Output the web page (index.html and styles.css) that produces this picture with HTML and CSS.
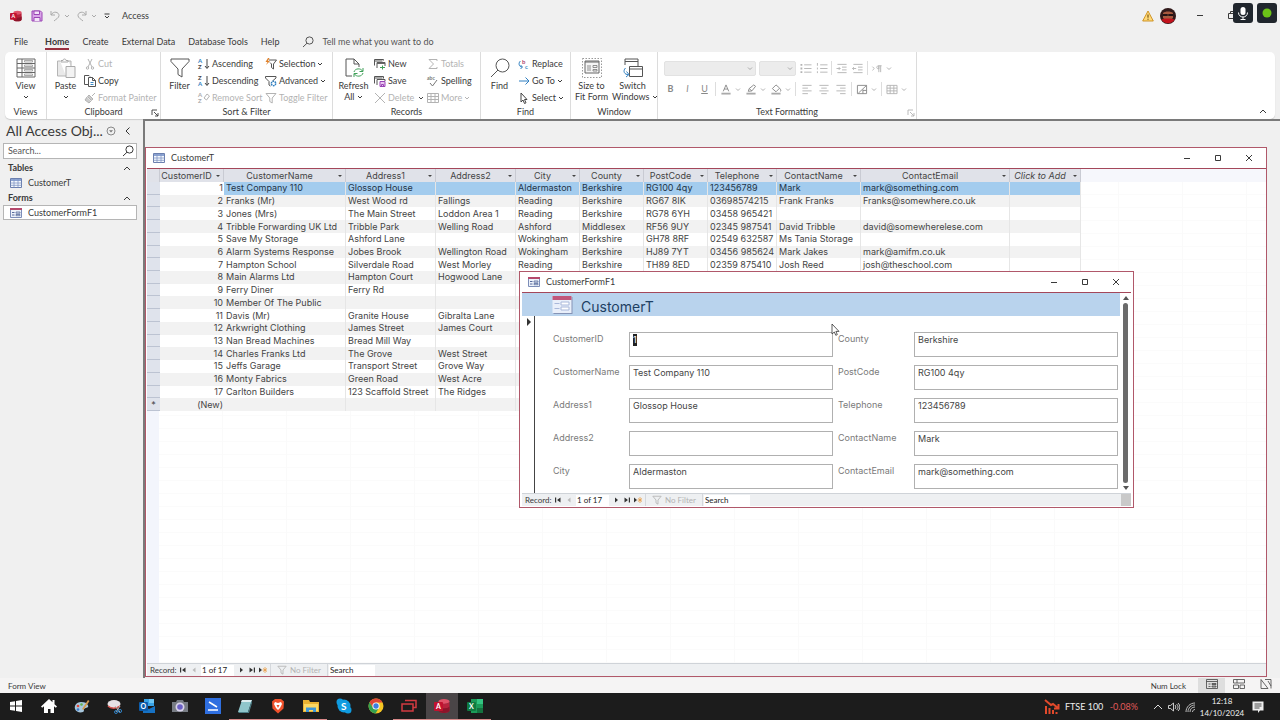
FILE: index.html
```html
<!DOCTYPE html>
<html lang="en">
  <head>
    <meta charset="UTF-8" />
    <meta name="viewport" content="width=device-width, initial-scale=1.0" />
    <title>Access</title>
    <link rel="stylesheet" href="styles.css">
  </head>
  <body>
    <!-- Shared icons -->
    <svg class="sprite" aria-hidden="true">
      <symbol id="chev" viewBox="0 0 6 6"><path d="M1 2l2 2 2-2" fill="none" stroke="currentColor" /></symbol>
      <symbol id="up" viewBox="0 0 8 8"><path d="M1 6l3-3 3 3" fill="none" stroke="currentColor" /></symbol>
      <symbol id="search" viewBox="0 0 12 12"><circle cx="7.5" cy="4.5" r="3.6" fill="none" stroke="currentColor" /><path d="M5 7.2L1 11" stroke="currentColor" /></symbol>
      <symbol id="funnel" viewBox="0 0 12 12"><path d="M1 1.5h10L7.2 6v5L4.8 9.5V6z" fill="none" stroke="currentColor" /></symbol>
      <symbol id="table" viewBox="0 0 12 10"><path d="M.5 .5h11v9H.5z" fill="#f4f8fd" stroke="#6b7fae" /><path d="M1 1h10v2H1z" fill="#8ba3d2" /><path d="M.5 5h11M.5 7.3h11M4 1v8.5M8 1v8.5" stroke="#8196c4" stroke-width=".8" /></symbol>
      <symbol id="form" viewBox="0 0 12 10"><path d="M.5 .5h11v9H.5z" fill="#edf2fa" stroke="#7c8db8" /><path d="M0 0h12v2H0z" fill="#b4496c" /><path d="M2 4.5h2.5M2 7h2.5" stroke="#56699c" /><path d="M6 4h4v1.2H6zM6 6.5h4v1.2H6z" fill="#fff" stroke="#56699c" stroke-width=".8" /></symbol>
      <symbol id="launch" viewBox="0 0 8 8"><path d="M1 6V1h5M3 3l4 4M7 4v3H4" fill="none" stroke="currentColor" stroke-width=".9" /></symbol>
      <symbol id="grid" viewBox="0 0 12 12"><path d="M.5 1.5h11v9H.5zM.5 4.5h11M.5 7.5h11M4 1.5v9M8 1.5v9" fill="none" stroke="currentColor" /></symbol>
      <symbol id="min" viewBox="0 0 10 10"><path d="M2 5.5h6" stroke="currentColor" /></symbol>
      <symbol id="max" viewBox="0 0 10 10"><path d="M2.5 2.5h5v5h-5z" fill="none" stroke="currentColor" /></symbol>
      <symbol id="close" viewBox="0 0 10 10"><path d="M2 2l6 6M8 2l-6 6" stroke="currentColor" /></symbol>
      <symbol id="access" viewBox="0 0 16 16"><ellipse cx="10" cy="3.5" rx="5.5" ry="2.5" fill="#e05268" /><path d="M4.5 3.5v9c0 3.3 11 3.3 11 0v-9c0 3-11 3-11 0z" fill="#b7223c" /><path d="M4.5 8c0 3 11 3 11 0v4.5c0 3.3-11 3.3-11 0z" fill="#8d142a" /><rect y="4" width="9" height="9" rx="1" fill="#c1122f" /><text x="2" y="11" font-size="7" font-weight="700" fill="#fff">A</text></symbol>
    </svg>

    <header class="titlebar">
      <svg class="app" viewBox="0 0 16 16"><use href="#access" /></svg>
      <button class="qat" aria-label="Save"><svg viewBox="0 0 12 12"><path d="M1 1h8.5L11 2.5V11H1z" fill="#d9a5e8" stroke="#9a45b5" /><path d="M3 1h5.5v3.5H3zM3 11V7.5h6V11" fill="#f3e3f8" stroke="#9a45b5" /></svg></button>
      <button class="qat off" aria-label="Undo"><svg viewBox="0 0 12 12"><path d="M2 1v4h4M2 5c2.5-4.5 8-3 8 .5C10 8 7 9 5 11" fill="none" stroke="currentColor" /></svg><svg class="chev"><use href="#chev" /></svg></button>
      <button class="qat off" aria-label="Redo"><svg viewBox="0 0 12 12"><path d="M10 1v4H6M10 5C7.5.5 2 2 2 5.5 2 8 5 9 7 11" fill="none" stroke="currentColor" /></svg><svg class="chev"><use href="#chev" /></svg></button>
      <button class="qat" aria-label="Customise Quick Access Toolbar"><svg class="custom" viewBox="0 0 8 8"><path d="M1.5 2h5" stroke="currentColor" /><path d="M2 4l2 2 2-2" fill="none" stroke="currentColor" /></svg></button>
      <span class="name">Access</span>
      <svg class="warn" viewBox="0 0 12 12"><path d="M6 1l5.3 10H.7z" fill="#ffd978" stroke="#c98a16" stroke-width=".9" /><path d="M6 4.5v3.2M6 8.7v1.1" stroke="#5c3d00" /></svg>
      <svg class="avatar" viewBox="0 0 16 16"><circle cx="8" cy="8" r="8" fill="#31191a" /><path d="M3 5c2-2 8-2 10 0v5c-2 2-8 2-10 0z" fill="#a8593f" /><path d="M3 6h4.5L8 7l.5-1H13v2H9L8 7.5 7 8H3z" fill="#241415" /><path d="M1.2 11.5c3-1.5 10-1.5 13.6 0A8 8 0 0 1 1.2 11.5z" fill="#c3121c" /></svg>
      <div class="controls">
        <button aria-label="Minimise"><svg viewBox="0 0 10 10"><use href="#min" /></svg></button>
        <button aria-label="Restore"><svg viewBox="0 0 10 10"><path d="M1.5 3.5h6v5h-6zM3.5 3V1.5h6v5H8" fill="none" stroke="currentColor" /></svg></button>
      </div>
      <div class="capture">
        <span><svg viewBox="0 0 20 20"><rect x="7.5" y="4" width="5" height="8" rx="2.5" fill="#fff" /><path d="M5.5 9.5c0 6 9 6 9 0M10 14v3M7.5 16.5h5" fill="none" stroke="#fff" /></svg></span>
        <span><svg viewBox="0 0 20 20"><circle cx="10" cy="10" r="4.5" fill="#6cc317" /></svg></span>
      </div>
    </header>

    <nav class="tabs">
      <a href="#file">File</a>
      <a href="#home" class="active" aria-current="page">Home</a>
      <a href="#create">Create</a>
      <a href="#external">External Data</a>
      <a href="#tools">Database Tools</a>
      <a href="#help">Help</a>
      <label class="tell"><svg><use href="#search" /></svg><input type="text" placeholder="Tell me what you want to do" aria-label="Tell me what you want to do" /></label>
    </nav>

    <section class="ribbon">
      <div class="group views">
        <div class="tools">
          <button class="big"><svg viewBox="0 0 20 20"><path d="M1 1h18v18H1zM1 5.5h18M1 10h18M1 14.5h18M6 1v18" fill="none" stroke="#666" /><path d="M8.5 2.5h8V4h-8zM8.5 7h8v1.5h-8zM8.5 11.5h8V13h-8zM8.5 16h8v1.5h-8z" fill="none" stroke="#888" stroke-width=".7" /></svg>View<svg class="chev"><use href="#chev" /></svg></button>
        </div>
        <p>Views</p>
      </div>
      <div class="group clipboard">
        <div class="tools">
          <button class="big"><svg viewBox="0 0 20 20"><path d="M4 3H1.5v15H10M12 3h3v5" fill="#e9e9e9" stroke="#b5b5b5" /><path d="M5 4V2.5h2c0-2 3-2 3 0h2V4z" fill="#fff" stroke="#aaa" /><path d="M10 8.5h9v11h-9z" fill="#f3f3f3" stroke="#aaa" /></svg>Paste<svg class="chev"><use href="#chev" /></svg></button>
          <div class="stack">
            <button disabled><svg viewBox="0 0 12 12"><path d="M4 1l4 8M8 1L4 9" stroke="currentColor" fill="none" /><circle cx="3.5" cy="10" r="1.2" fill="none" stroke="currentColor" /><circle cx="8.5" cy="10" r="1.2" fill="none" stroke="currentColor" /></svg>Cut</button>
            <button><svg viewBox="0 0 12 12"><path d="M4.5 9.5h-4v-9H5l1 1M4.5 2.5h4l3 3v6h-7zM8.5 2.5v3h3" fill="#fff" stroke="#555" /><path d="M6.5 7.5h3M6.5 9.5h3" stroke="#3c88c5" /></svg>Copy</button>
            <button disabled><svg viewBox="0 0 12 12"><path d="M11 1L8 4M5 3l4 4-1.5 1.5-4-4zM3 5L1 8l4 3 2-2" fill="#ccc" stroke="currentColor" /></svg>Format Painter</button>
          </div>
        </div>
        <p>Clipboard</p>
        <button class="launch" aria-label="Clipboard options"><svg><use href="#launch" /></svg></button>
      </div>
      <div class="group sort">
        <div class="tools">
          <button class="big"><svg viewBox="0 0 20 20"><path d="M1 1h18v2.5L12 11v8l-4-2.5V11L1 3.5z" fill="none" stroke="#555" /></svg>Filter</button>
          <div class="stack">
            <button><svg viewBox="0 0 12 12"><text x="0" y="5" class="b">A</text><text x="0" y="11">Z</text><path d="M9 1v9M7 8l2 2.5L11 8" fill="none" stroke="#444" /></svg>Ascending</button>
            <button><svg viewBox="0 0 12 12"><text x="0" y="5">Z</text><text x="0" y="11" class="b">A</text><path d="M9 1v9M7 8l2 2.5L11 8" fill="none" stroke="#444" /></svg>Descending</button>
            <button disabled><svg viewBox="0 0 12 12"><text x="0" y="5" class="o">A</text><text x="0" y="11" class="o">Z</text><path d="M6 6l3-4 2.5 2-3 4z" fill="none" stroke="currentColor" /></svg>Remove Sort</button>
          </div>
          <div class="stack">
            <button><svg viewBox="0 0 12 12"><path d="M4 2h7.5l-3 4v5l-2-1.5V6L5 4.5" fill="none" stroke="#555" /><path d="M3 0L.5 4h2L1 7l4-4H3L4.5 0z" fill="#e0812a" /></svg>Selection<svg class="chev"><use href="#chev" /></svg></button>
            <button><svg viewBox="0 0 12 12"><path d="M.5 1.5H11V3L7.5 6M.5 1.5V3L4 6.5V10l1.5 1" fill="none" stroke="#555" /><circle cx="8.5" cy="8.5" r="2.2" fill="none" stroke="#2f7fc1" stroke-width="1.5" stroke-dasharray="1.5 .6" /></svg>Advanced<svg class="chev"><use href="#chev" /></svg></button>
            <button disabled><svg><use href="#funnel" /></svg>Toggle Filter</button>
          </div>
        </div>
        <p>Sort &amp; Filter</p>
      </div>
      <div class="group records">
        <div class="tools">
          <button class="big"><svg viewBox="0 0 20 20"><path d="M8 18H2V1h8l5 5v3M10 1v5h5" fill="none" stroke="#555" /><path d="M10 14c1-4 7-4 8.5-1M19 10v3.5h-3.5M19 15c-1 4-7 4-8.5 1M10 19v-3.5h3.5" fill="none" stroke="#3f9f58" /></svg>Refresh<br />All <svg class="chev"><use href="#chev" /></svg></button>
          <div class="stack">
            <button><svg viewBox="0 0 12 12"><path d="M.5 7.5v-6h9v1M.5 3h8M3 10V4.5h8V8" fill="none" stroke="#555" /><path d="M3 4.5h8V6H3z" fill="#666" /><path d="M6 9.5h5M8.5 7.5v4" stroke="#3f9f58" /></svg>New</button>
            <button><svg viewBox="0 0 12 12"><path d="M.5 8.5v-7h9v2M.5 3h8M3 10V4.5h8V6" fill="none" stroke="#555" /><path d="M6 6.5h5v5H6zM7.5 11.5v-2h2v2" fill="#e8c6f0" stroke="#9a45b5" /></svg>Save</button>
            <button disabled><svg viewBox="0 0 12 12"><path d="M1 1l10 10M11 1L1 11" stroke="currentColor" /></svg>Delete<svg class="chev far"><use href="#chev" /></svg></button>
          </div>
          <div class="stack">
            <button disabled><svg viewBox="0 0 12 12"><path d="M10 3V1.5H2L6.5 6 2 10.5h8V9" fill="none" stroke="currentColor" /></svg>Totals</button>
            <button><svg viewBox="0 0 12 12"><text x="0" y="5" class="s">abc</text><path d="M3 8l2.5 3L10 5" fill="none" stroke="#777" /></svg>Spelling</button>
            <button disabled><svg><use href="#grid" /></svg>More<svg class="chev"><use href="#chev" /></svg></button>
          </div>
        </div>
        <p>Records</p>
      </div>
      <div class="group find">
        <div class="tools">
          <button class="big"><svg viewBox="0 0 20 20"><circle cx="12.5" cy="7.5" r="6.5" fill="none" stroke="#555" /><path d="M8 12l-7 7" stroke="#555" /></svg>Find</button>
          <div class="stack">
            <button><svg viewBox="0 0 12 12"><text x="4" y="6" class="r">b</text><text x="7" y="11" class="b">c</text><path d="M2.5 3C0 5 1 9 4 9M2.5 7l2 2-2 2" fill="none" stroke="#2f7fc1" /></svg>Replace</button>
            <button><svg viewBox="0 0 12 12"><path d="M1 6h10M7.5 2.5L11 6 7.5 9.5" fill="none" stroke="#2f7fc1" /></svg>Go To<svg class="chev"><use href="#chev" /></svg></button>
            <button><svg viewBox="0 0 12 12"><path d="M3 1v9l2-2 1.5 3.5 1.5-.7-1.5-3.3H9z" fill="none" stroke="#444" /></svg>Select<svg class="chev"><use href="#chev" /></svg></button>
          </div>
        </div>
        <p>Find</p>
      </div>
      <div class="group window">
        <div class="tools">
          <button class="big"><svg viewBox="0 0 20 20"><path d="M.5 .5h19v19H.5z" fill="none" stroke="#999" stroke-dasharray="1.5 1.5" /><path d="M3 3h14v12H3z" fill="#f5f5f5" stroke="#666" /><path d="M3 4h14" stroke="#666" /><path d="M5 8h4M5 10h4M5 12h4M11 7.5h4v2h-4zM11 11.5h4V13h-4z" fill="none" stroke="#777" stroke-width=".8" /></svg>Size to<br />Fit Form</button>
          <button class="big"><svg viewBox="0 0 20 20"><path d="M2 7V1h13v7M2 3.5h13M6.5 8.5h13v10h-13zM6.5 11h13" fill="none" stroke="#555" /><path d="M2.5 10c-3 3-1 7 3 6.5M3.5 13.5l2.5 3-3 2.5" fill="none" stroke="#2f7fc1" /></svg>Switch<br />Windows <svg class="chev"><use href="#chev" /></svg></button>
        </div>
        <p>Window</p>
      </div>
      <div class="group format">
        <div class="rows">
          <div class="row">
            <span class="pick font"><select disabled aria-label="Font"></select><svg class="chev"><use href="#chev" /></svg></span>
            <span class="pick size"><select disabled aria-label="Font size"></select><svg class="chev"><use href="#chev" /></svg></span>
            <button disabled aria-label="Bullets"><svg viewBox="0 0 12 12"><path d="M4 2h8M4 6h8M4 10h8" stroke="currentColor" /><path d="M0 2h2M0 6h2M0 10h2" stroke="currentColor" stroke-width="2" /></svg></button>
            <button disabled aria-label="Numbering"><svg viewBox="0 0 12 12"><path d="M4 2h8M4 6h8M4 10h8M1 0v3M1 5v2M1 9v2" stroke="currentColor" /></svg></button>
            <i></i>
            <button disabled aria-label="Decrease indent"><svg viewBox="0 0 12 12"><path d="M1 1.5h10M6 4.5h5M6 7.5h5M1 10.5h10M0 6h4M2.5 4.5L4 6 2.5 7.5" fill="none" stroke="currentColor" /></svg></button>
            <button disabled aria-label="Increase indent"><svg viewBox="0 0 12 12"><path d="M1 1.5h10M6 4.5h5M6 7.5h5M1 10.5h10M0 6h4M1.5 4.5L0 6l1.5 1.5" fill="none" stroke="currentColor" /></svg></button>
            <i></i>
            <button disabled aria-label="Text direction"><svg viewBox="0 0 12 12"><path d="M1 4l2 2-2 2M8 10V3h3M10 3v7M8 3c-3 0-3 3.5 0 3.5z" fill="none" stroke="currentColor" /></svg><svg class="chev"><use href="#chev" /></svg></button>
          </div>
          <div class="row wide">
            <button disabled><b>B</b></button>
            <button disabled><em>I</em></button>
            <button disabled><u>U</u></button>
            <i></i>
            <button disabled aria-label="Font colour"><svg viewBox="0 0 12 12"><path d="M3 8l3-7 3 7M4 5.5h4" fill="none" stroke="#888" /><path d="M1 10.5h10" stroke="#aaa" stroke-width="2" /></svg><svg class="chev"><use href="#chev" /></svg></button>
            <button disabled aria-label="Highlight"><svg viewBox="0 0 12 12"><path d="M3 8l1-3 5-4 2 1.5-4 5zM4 5l3 2.5" fill="none" stroke="#888" /><path d="M1 10.5h10" stroke="#aaa" stroke-width="2" /></svg><svg class="chev"><use href="#chev" /></svg></button>
            <button disabled aria-label="Background colour"><svg viewBox="0 0 12 12"><path d="M2 5l4-4 4 3.5-4 4zM10.5 5c1 2 1 3 0 3" fill="none" stroke="#888" /><path d="M1 10.5h10" stroke="#aaa" stroke-width="2" /></svg><svg class="chev"><use href="#chev" /></svg></button>
            <i></i>
            <button disabled aria-label="Align left"><svg viewBox="0 0 12 12"><path d="M1 1.5h10M1 4.5h6M1 7.5h10M1 10.5h6" stroke="currentColor" /></svg></button>
            <button disabled aria-label="Centre"><svg viewBox="0 0 12 12"><path d="M1 1.5h10M3 4.5h6M1 7.5h10M3 10.5h6" stroke="currentColor" /></svg></button>
            <button disabled aria-label="Align right"><svg viewBox="0 0 12 12"><path d="M1 1.5h10M5 4.5h6M1 7.5h10M5 10.5h6" stroke="currentColor" /></svg></button>
            <i></i>
            <button disabled aria-label="Alternate row colour"><svg viewBox="0 0 12 12"><path d="M1 1.5h10v9H1zM2 10l9-8.5M7 7h4M7 6v4.5" fill="none" stroke="#888" /></svg><svg class="chev"><use href="#chev" /></svg></button>
            <i></i>
            <button disabled aria-label="Gridlines"><svg><use href="#grid" /></svg><svg class="chev"><use href="#chev" /></svg></button>
          </div>
        </div>
        <p>Text Formatting</p>
        <button class="launch" disabled aria-label="Text formatting options"><svg><use href="#launch" /></svg></button>
      </div>
      <button class="collapse" aria-label="Collapse the ribbon"><svg><use href="#up" /></svg></button>
    </section>

    <main class="workspace">
      <aside class="objects">
        <div class="heading">
          <h1>All Access Obj...</h1>
          <button aria-label="Choose category"><svg viewBox="0 0 10 10"><circle cx="5" cy="5" r="4" fill="none" stroke="#888" /><path d="M3 4.2h4L5 6.5z" fill="#777" /></svg></button>
          <button aria-label="Shutter bar"><svg viewBox="0 0 10 10"><path d="M6.5 1.5L3 5l3.5 3.5" fill="none" stroke="#333" /></svg></button>
        </div>
        <label class="lookup"><input type="text" placeholder="Search..." aria-label="Search objects" /><svg><use href="#search" /></svg></label>
        <h2>Tables <svg><use href="#up" /></svg></h2>
        <a href="#CustomerT"><svg><use href="#table" /></svg>CustomerT</a>
        <h2>Forms <svg><use href="#up" /></svg></h2>
        <a href="#CustomerFormF1" class="selected"><svg><use href="#form" /></svg>CustomerFormF1</a>
      </aside>

      <div class="mdi">
        <section class="win sheet">
          <header>
            <svg class="kind"><use href="#table" /></svg><span>CustomerT</span>
            <button aria-label="Minimise"><svg><use href="#min" /></svg></button>
            <button aria-label="Maximise"><svg><use href="#max" /></svg></button>
            <button aria-label="Close"><svg><use href="#close" /></svg></button>
          </header>
          <div class="canvas">
            <table>
              <colgroup>
                <col class="sel" /><col class="id" /><col class="company" /><col class="line1" /><col class="line2" /><col class="city" /><col class="county" /><col class="post" /><col class="phone" /><col class="contact" /><col class="email" /><col class="add" />
              </colgroup>
              <thead>
                <tr>
                  <th></th>
                  <th><div><span>CustomerID</span><button aria-label="Sort CustomerID"></button></div></th>
                  <th><div><span>CustomerName</span><button aria-label="Sort CustomerName"></button></div></th>
                  <th><div><span>Address1</span><button aria-label="Sort Address1"></button></div></th>
                  <th><div><span>Address2</span><button aria-label="Sort Address2"></button></div></th>
                  <th><div><span>City</span><button aria-label="Sort City"></button></div></th>
                  <th><div><span>County</span><button aria-label="Sort County"></button></div></th>
                  <th><div><span>PostCode</span><button aria-label="Sort PostCode"></button></div></th>
                  <th><div><span>Telephone</span><button aria-label="Sort Telephone"></button></div></th>
                  <th><div><span>ContactName</span><button aria-label="Sort ContactName"></button></div></th>
                  <th><div><span>ContactEmail</span><button aria-label="Sort ContactEmail"></button></div></th>
                  <th><div><span><em>Click to Add</em></span><button aria-label="Add a field"></button></div></th>
                </tr>
              </thead>
              <tbody>
                <tr class="current"><th></th><td>1</td><td>Test Company 110</td><td>Glossop House</td><td></td><td>Aldermaston</td><td>Berkshire</td><td>RG100 4qy</td><td>123456789</td><td>Mark</td><td>mark@something.com</td><td></td></tr>
                <tr><th></th><td>2</td><td>Franks (Mr)</td><td>West Wood rd</td><td>Fallings</td><td>Reading</td><td>Berkshire</td><td>RG67 8IK</td><td>03698574215</td><td>Frank Franks</td><td>Franks@somewhere.co.uk</td><td></td></tr>
                <tr><th></th><td>3</td><td>Jones (Mrs)</td><td>The Main Street</td><td>Loddon Area 1</td><td>Reading</td><td>Berkshire</td><td>RG78 6YH</td><td>03458 965421</td><td></td><td></td><td></td></tr>
                <tr><th></th><td>4</td><td>Tribble Forwarding UK Ltd</td><td>Tribble Park</td><td>Welling Road</td><td>Ashford</td><td>Middlesex</td><td>RF56 9UY</td><td>02345 987541</td><td>David Tribble</td><td>david@somewherelese.com</td><td></td></tr>
                <tr><th></th><td>5</td><td>Save My Storage</td><td>Ashford Lane</td><td></td><td>Wokingham</td><td>Berkshire</td><td>GH78 8RF</td><td>02549 632587</td><td>Ms Tania Storage</td><td></td><td></td></tr>
                <tr><th></th><td>6</td><td>Alarm Systems Response</td><td>Jobes Brook</td><td>Wellington Road</td><td>Wokingham</td><td>Berkshire</td><td>HJ89 7YT</td><td>03456 985624</td><td>Mark Jakes</td><td>mark@amifm.co.uk</td><td></td></tr>
                <tr><th></th><td>7</td><td>Hampton School</td><td>Silverdale Road</td><td>West Morley</td><td>Reading</td><td>Berkshire</td><td>TH89 8ED</td><td>02359 875410</td><td>Josh Reed</td><td>josh@theschool.com</td><td></td></tr>
                <tr><th></th><td>8</td><td>Main Alarms Ltd</td><td>Hampton Court</td><td>Hogwood Lane</td><td></td><td></td><td></td><td></td><td></td><td></td><td></td></tr>
                <tr><th></th><td>9</td><td>Ferry Diner</td><td>Ferry Rd</td><td></td><td></td><td></td><td></td><td></td><td></td><td></td><td></td></tr>
                <tr><th></th><td>10</td><td>Member Of The Public</td><td></td><td></td><td></td><td></td><td></td><td></td><td></td><td></td><td></td></tr>
                <tr><th></th><td>11</td><td>Davis (Mr)</td><td>Granite House</td><td>Gibralta Lane</td><td></td><td></td><td></td><td></td><td></td><td></td><td></td></tr>
                <tr><th></th><td>12</td><td>Arkwright Clothing</td><td>James Street</td><td>James Court</td><td></td><td></td><td></td><td></td><td></td><td></td><td></td></tr>
                <tr><th></th><td>13</td><td>Nan Bread Machines</td><td>Bread Mill Way</td><td></td><td></td><td></td><td></td><td></td><td></td><td></td><td></td></tr>
                <tr><th></th><td>14</td><td>Charles Franks Ltd</td><td>The Grove</td><td>West Street</td><td></td><td></td><td></td><td></td><td></td><td></td><td></td></tr>
                <tr><th></th><td>15</td><td>Jeffs Garage</td><td>Transport Street</td><td>Grove Way</td><td></td><td></td><td></td><td></td><td></td><td></td><td></td></tr>
                <tr><th></th><td>16</td><td>Monty Fabrics</td><td>Green Road</td><td>West Acre</td><td></td><td></td><td></td><td></td><td></td><td></td><td></td></tr>
                <tr><th></th><td>17</td><td>Carlton Builders</td><td>123 Scaffold Street</td><td>The Ridges</td><td></td><td></td><td></td><td></td><td></td><td></td><td></td></tr>
                <tr><th>*</th><td>(New)</td><td></td><td></td><td></td><td></td><td></td><td></td><td></td><td></td><td></td><td></td></tr>
              </tbody>
            </table>
          </div>
          <footer class="recnav">
            <label for="sheet-rec">Record:</label>
            <button aria-label="First record"><svg viewBox="0 0 8 8"><path d="M1 1.5h1.2v5H1zM6.5 1.5v5L3 4z" /></svg></button>
            <button aria-label="Previous record" disabled><svg viewBox="0 0 8 8"><path d="M5.5 1.5v5L2.5 4z" /></svg></button>
            <input id="sheet-rec" class="pos" type="text" value="1 of 17" />
            <button aria-label="Next record"><svg viewBox="0 0 8 8"><path d="M3 1.5v5L6 4z" /></svg></button>
            <button aria-label="Last record"><svg viewBox="0 0 8 8"><path d="M1.5 1.5v5L5 4zM5.8 1.5H7v5H5.8z" /></svg></button>
            <button aria-label="New record"><svg viewBox="0 0 8 8"><path d="M0 1.5v5L3 4z" /><path d="M6 1v6M3.5 4H8M4.3 2.3l3.4 3.4M7.7 2.3L4.3 5.7" stroke="#e8a04a" stroke-width=".8" /></svg></button>
            <button class="nofilter" disabled><svg><use href="#funnel" /></svg>No Filter</button>
            <input class="seek" type="text" value="Search" aria-label="Search records" />
          </footer>
        </section>

        <section class="win form">
          <header>
            <svg class="kind"><use href="#form" /></svg><span>CustomerFormF1</span>
            <button aria-label="Minimise"><svg><use href="#min" /></svg></button>
            <button aria-label="Maximise"><svg><use href="#max" /></svg></button>
            <button aria-label="Close"><svg><use href="#close" /></svg></button>
          </header>
          <div class="detail">
            <div class="page">
              <div class="banner">
                <svg viewBox="0 0 20 18"><path d="M1 1h19v17H1z" fill="#8593b5" /><path d="M0 0h19v17H0z" fill="#e9effa" /><path d="M0 0h19v4H0z" fill="#c0567a" /><path d="M2 7.5h5M2 12.5h5" stroke="#a9b8da" /><path d="M8.5 6h8v3h-8zM8.5 11h8v3h-8z" fill="#fff" stroke="#a9b8da" /></svg>
                <h2>CustomerT</h2>
              </div>
              <div class="body">
                <div class="selector"><svg viewBox="0 0 6 8"><path d="M1 0v8l4-4z" fill="#333" /></svg></div>
                <form>
                  <label for="f1">CustomerID</label><div class="field"><mark>1</mark><input id="f1" type="text" /></div>
                  <label for="f2">County</label><input id="f2" type="text" value="Berkshire" />
                  <label for="f3">CustomerName</label><input id="f3" type="text" value="Test Company 110" />
                  <label for="f4">PostCode</label><input id="f4" type="text" value="RG100 4qy" />
                  <label for="f5">Address1</label><input id="f5" type="text" value="Glossop House" />
                  <label for="f6">Telephone</label><input id="f6" type="text" value="123456789" />
                  <label for="f7">Address2</label><input id="f7" type="text" />
                  <label for="f8">ContactName</label><input id="f8" type="text" value="Mark" />
                  <label for="f9">City</label><input id="f9" type="text" value="Aldermaston" />
                  <label for="f10">ContactEmail</label><input id="f10" type="text" value="mark@something.com" />
                </form>
              </div>
            </div>
            <div class="scroll">
              <svg viewBox="0 0 8 6"><path d="M1 5l3-4 3 4z" fill="#555" /></svg>
              <span></span>
              <svg viewBox="0 0 8 6"><path d="M1 1l3 4 3-4z" fill="#555" /></svg>
            </div>
          </div>
          <footer class="recnav">
            <label for="form-rec">Record:</label>
            <button aria-label="First record"><svg viewBox="0 0 8 8"><path d="M1 1.5h1.2v5H1zM6.5 1.5v5L3 4z" /></svg></button>
            <button aria-label="Previous record" disabled><svg viewBox="0 0 8 8"><path d="M5.5 1.5v5L2.5 4z" /></svg></button>
            <input id="form-rec" class="pos" type="text" value="1 of 17" />
            <button aria-label="Next record"><svg viewBox="0 0 8 8"><path d="M3 1.5v5L6 4z" /></svg></button>
            <button aria-label="Last record"><svg viewBox="0 0 8 8"><path d="M1.5 1.5v5L5 4zM5.8 1.5H7v5H5.8z" /></svg></button>
            <button aria-label="New record"><svg viewBox="0 0 8 8"><path d="M0 1.5v5L3 4z" /><path d="M6 1v6M3.5 4H8M4.3 2.3l3.4 3.4M7.7 2.3L4.3 5.7" stroke="#e8a04a" stroke-width=".8" /></svg></button>
            <button class="nofilter" disabled><svg><use href="#funnel" /></svg>No Filter</button>
            <input class="seek" type="text" value="Search" aria-label="Search records" />
            <span class="grip"></span>
          </footer>
          <svg class="pointer" viewBox="0 0 9 13"><path d="M1 1v10l2.3-2 1.5 3.3 1.5-.7-1.4-3.2H8z" fill="#fff" stroke="#333" stroke-width=".8" /></svg>
        </section>
      </div>
    </main>

    <footer class="status">
      <span class="mode">Form View</span>
      <span>Num Lock</span>
      <button class="on" aria-label="Form View"><svg viewBox="0 0 12 10"><path d="M.5 .5h11v9H.5zM.5 2.5h11M2.5 5h2M2.5 7.5h2M6 4.5h4v1H6zM6 7h4v1H6z" fill="none" stroke="#444" stroke-width=".8" /></svg></button>
      <button aria-label="Layout View"><svg viewBox="0 0 12 10"><path d="M.5 .5h11V4H.5zM.5 6h5v3.5h-5zM7 6h4.5v3.5H7zM4 .5V4" fill="none" stroke="#444" stroke-width=".8" /></svg></button>
      <button aria-label="Design View"><svg viewBox="0 0 12 10"><path d="M1 .5v9h7zM5 .5h6v9M8 2l3 5" fill="none" stroke="#444" stroke-width=".8" /></svg></button>
    </footer>

    <footer class="taskbar">
      <div class="pins">
        <button aria-label="Start"><svg viewBox="0 0 16 16"><path d="M2 4l5-.8v4.3H2zM8 3l6-1v5.500H8zM2 8.500h5v4.300L2 12zM8 8.500h6V14l-6-1z" fill="#fff" /></svg></button>
        <button aria-label="Home"><svg viewBox="0 0 16 16"><path d="M8 1L0 8.5l1.2 1.2L3 8.3V15h4v-4h2.5v4H13V8.3l1.8 1.4L16 8.5l-2.5-2.3V2h-2v2.3z" fill="#fff" /></svg></button>
        <button aria-label="Paint"><svg viewBox="0 0 16 16"><path d="M7 4C2 4 0 8 1 11s5 4 8 3c2-1 0-2.5 1.5-3.5S15 10 14 7.5 11 4 7 4z" fill="#a8c7dc" /><circle cx="4" cy="8" r="1.3" fill="#e0483c" /><circle cx="7.5" cy="6.5" r="1.3" fill="#62b14b" /><circle cx="4" cy="11.5" r="1.3" fill="#3a7bd0" /><path d="M8 11l6-9 1.5 1-6 9z" fill="#d39a4e" /></svg></button>
        <button aria-label="Snipping Tool"><svg viewBox="0 0 16 16"><ellipse cx="7" cy="6" rx="6.5" ry="4" fill="#e6e2e6" /><path d="M1 8c3 3 8 3 12 0" fill="none" stroke="#d9544e" stroke-width="1.5" /><path d="M8 8l5 6M13 8l-4 6" stroke="#bbb" /><circle cx="13" cy="13" r="1.6" fill="none" stroke="#2f7fc1" /><circle cx="9" cy="14" r="1.5" fill="none" stroke="#2f7fc1" /></svg></button>
        <button aria-label="Outlook"><svg viewBox="0 0 16 16"><path d="M5 1h10v7H5z" fill="#37a2e6" /><path d="M10 1h5v4h-5z" fill="#6cc6f5" /><path d="M4 8l6 3 6-3v7H4z" fill="#1672c4" /><rect y="4" width="9" height="9" rx="1" fill="#0c5cab" /><text x="1.5" y="11" font-size="7" font-weight="700" fill="#fff">O</text></svg></button>
        <button aria-label="Camera"><svg viewBox="0 0 16 16"><path d="M5 2h6l1 2h4v10H0V4h4z" fill="#777c84" /><circle cx="8" cy="9" r="4.5" fill="#d8d3ea" /><circle cx="8" cy="9" r="2.8" fill="#6a5fc4" /></svg></button>
        <button aria-label="Scanner"><svg viewBox="0 0 16 16"><path d="M0 0h16v16H0z" fill="#2f6fe0" /><path d="M4 4l8 5M3 12h10" stroke="#fff" stroke-width="1.5" /></svg></button>
        <button aria-label="Notepad" class="run"><svg viewBox="0 0 16 16"><path d="M5 2h10l-4 12H1z" fill="#8fc6cb" /><path d="M5 2h10l-1 2H4z" fill="#dfeef0" /><path d="M1 14h10l4-12v3l-3 10H2z" fill="#4d7f88" /></svg></button>
        <button aria-label="Brave" class="run"><svg viewBox="0 0 16 16"><path d="M5 1h6l3 2.5-.5 7-5.500 5-5.500-5L2 3.5z" fill="#f0512b" /><path d="M5 4l3 1 3-1 1 2-2 4-2 2-2-2-2-4z" fill="#fff" /><path d="M6.5 7L8 10l1.500-3z" fill="#f0512b" /></svg></button>
        <button aria-label="File Explorer" class="run"><svg viewBox="0 0 16 16"><path d="M0 2h6l1 2h9v10H0z" fill="#e9b233" /><path d="M1 6h14v7H1z" fill="#fbd865" /><path d="M3 14V9.500h10V14h-3v-2H6v2z" fill="#3f97d8" /></svg></button>
        <button aria-label="Skype"><svg viewBox="0 0 16 16"><circle cx="8" cy="8" r="6.5" fill="#0f9be0" /><circle cx="4" cy="4" r="3.5" fill="#0f9be0" /><circle cx="12" cy="12" r="3.5" fill="#0f9be0" /><text x="5" y="12" font-size="10" font-weight="700" fill="#fff">S</text></svg></button>
        <button aria-label="Chrome"><svg viewBox="0 0 16 16"><circle cx="8" cy="8" r="7.5" fill="#f6c623" /><path d="M1.5 4.3A7.5 7.5 0 0 1 14.6 4.5H8L4.9 9.7z" fill="#de4637" /><path d="M1.5 4.3A7.5 7.5 0 0 0 7.5 15.5L11 9.7H4.9z" fill="#33a250" /><circle cx="8" cy="8" r="3.6" fill="#fff" /><circle cx="8" cy="8" r="2.7" fill="#3d7fe0" /></svg></button>
        <button aria-label="Remote Desktop" class="run"><svg viewBox="0 0 16 16"><path d="M4 2.5h11v7h-3M1 6h11v7H1z" fill="none" stroke="#d23a40" stroke-width="1.5" /></svg></button>
        <button aria-label="Access" class="run open"><svg viewBox="0 0 16 16"><use href="#access" /></svg></button>
        <button aria-label="Excel" class="run"><svg viewBox="0 0 16 16"><path d="M4 1h12v14H4z" fill="#1c9a58" /><path d="M10 1h6v5h-6z" fill="#33c481" /><path d="M10 10h6v5h-6z" fill="#14713f" /><rect y="4" width="9" height="9" rx="1" fill="#0f7a40" /><text x="2" y="11" font-size="7" font-weight="700" fill="#fff">X</text></svg></button>
      </div>
      <div class="tray">
        <svg class="stock" viewBox="0 0 16 16"><path d="M1 1l6 5 2-1 5 4M14.5 5v4.5H10" fill="none" stroke="#e1492b" stroke-width="2" /><path d="M2 7v8M5.5 9v6M9 11v4M12.5 13v2" stroke="#e1492b" stroke-width="2" /></svg>
        <span class="ticker">FTSE 100 <span>-0.08%</span></span>
        <button aria-label="Show hidden icons"><svg viewBox="0 0 12 12"><path d="M2 8l4-4 4 4" fill="none" stroke="#ddd" /></svg></button>
        <button aria-label="Volume"><svg viewBox="0 0 12 12"><path d="M.5 4.5h2l3-2.5v8l-3-2.5h-2zM7 4c1 1 1 3 0 4M8.5 3c2 2 2 4 0 6M10 2c2.5 2.5 2.5 5.5 0 8" fill="none" stroke="#ddd" stroke-width=".9" /></svg></button>
        <button aria-label="Network"><svg viewBox="0 0 12 12"><path d="M2 11C2 6 6 2 11 2M4 11c0-4 3-7 7-7M6 11c0-3 2-5 5-5M8.5 11c0-1.5 1-2.5 2.5-2.5" fill="none" stroke="#bbb" /></svg></button>
        <time>12:18<br />14/10/2024</time>
        <button aria-label="Notifications"><svg viewBox="0 0 12 12"><path d="M.5 .5h11v9H8L6 12V9.5H.5z" fill="#eee" /><path d="M2.5 3h7M2.5 5h7M2.5 7h5" stroke="#222" stroke-width=".8" /></svg></button>
      </div>
    </footer>
  </body>
</html>
```

FILE: styles.css
```css
/* Global styles */
* {
  margin: 0;
  padding: 0;
  box-sizing: border-box;
}
body {
  height: 100vh;
  display: flex;
  overflow: hidden;
  color: #3a3a3a;
  flex-direction: column;
  background: #f0f0f0;
  font: 9px/12px Lato, "Open Sans", sans-serif;
}
button,
input,
select {
  border: none;
  font: inherit;
  color: inherit;
  background: none;
}
a {
  color: inherit;
  text-decoration: none;
}
svg {
  flex: none;
  width: 12px;
  height: 12px;
}
.sprite {
  display: none;
}
svg.chev {
  width: 6px;
  height: 6px;
}

/* Title bar */
.titlebar {
  flex: none;
  height: 32px;
  display: flex;
  padding-left: 10px;
  align-items: center;
}
.app {
  margin-right: 9px;
}
.qat {
  gap: 3px;
  display: flex;
  margin-right: 6px;
  align-items: center;
}
.qat .custom {
  width: 8px;
  height: 8px;
}
.qat.off {
  color: #aaa;
}
.titlebar .name {
  flex: 1;
  margin-left: 5px;
}
.avatar {
  width: 16px;
  height: 16px;
  margin: 0 19px 0 6px;
}
.controls {
  gap: 22px;
  display: flex;
  width: 85px;
}
.controls svg {
  width: 10px;
  height: 10px;
}
.capture {
  gap: 4px;
  top: 3px;
  right: 3px;
  display: flex;
  position: absolute;
}
.capture span {
  height: 20px;
  border-radius: 3px;
  background: #20262d;
}
.capture svg {
  width: 20px;
  height: 20px;
}

/* Ribbon tabs */
.tabs {
  gap: 13px;
  flex: none;
  height: 20px;
  display: flex;
  padding-left: 14px;
}
.tabs a {
  height: 18px;
  padding-top: 4px;
}
.tabs a:first-child {
  margin-right: 4px;
}
.tabs .active {
  font-weight: 700;
  border-bottom: 2px solid #97303f;
}
.tell {
  gap: 8px;
  display: flex;
  margin-left: 10px;
  align-items: center;
}
.tell svg {
  color: #555;
}
.tell input {
  width: 150px;
}
input::placeholder {
  color: #555;
}

/* Ribbon */
.ribbon {
  flex: none;
  height: 67px;
  display: flex;
  margin: 0 5px;
  border-radius: 5px;
  background: #fff;
  box-shadow: 0 1px 1px #ccc;
}
.group {
  flex: none;
  display: flex;
  padding-top: 3px;
  position: relative;
  flex-direction: column;
  border-right: 1px solid #dcdcdc;
}
.group p {
  text-align: center;
}
.group.views {
  width: 42px;
}
.group.clipboard {
  width: 114px;
}
.group.sort {
  width: 172px;
}
.group.records {
  width: 148px;
}
.group.find {
  width: 90px;
}
.group.window {
  width: 87px;
}
.group.format {
  width: 259px;
}
.tools {
  display: flex;
  height: 51px;
}
.big {
  width: 37px;
  flex: none;
  line-height: 11px;
  align-self: flex-start;
  white-space: nowrap;
}
.views .big,
.records .big,
.window .big {
  width: 41px;
}
.big svg {
  width: 20px;
  height: 20px;
  display: block;
  margin: 3px auto 2px;
}
.big svg.chev {
  width: 6px;
  height: 6px;
  margin: 3px auto;
}
.big br ~ svg.chev {
  margin: 0;
  display: inline-block;
}
.stack {
  display: flex;
  flex-direction: column;
}
.clipboard .stack {
  width: 76px;
}
.sort .stack {
  width: 68px;
}
.records .stack {
  width: 56px;
}
.stack button {
  gap: 2px;
  height: 17px;
  display: flex;
  align-items: center;
  white-space: nowrap;
}
.stack svg {
  overflow: visible;
}
.stack text {
  fill: #444;
  font-size: 6px;
  font-weight: 700;
}
.stack .b {
  fill: #2f7fc1;
}
.stack .r {
  fill: #b04a72;
}
.stack .o {
  fill: #aaa;
}
.stack .s {
  fill: #777;
  font-size: 5px;
}
button:disabled {
  color: #b3b3b3;
}
.chev.far {
  color: #444;
  margin-left: 2px;
}
.launch {
  right: 1px;
  bottom: 2px;
  display: flex;
  position: absolute;
}
.launch svg,
.collapse svg {
  width: 8px;
  height: 8px;
}
.collapse {
  height: 8px;
  display: flex;
  align-self: flex-end;
  margin: 0 8px 4px auto;
}

/* Text formatting */
.rows {
  height: 51px;
  padding: 4px 0 0 6px;
}
.row {
  gap: 3px;
  display: flex;
  height: 18px;
  align-items: center;
}
.row.wide {
  gap: 4px;
  margin-top: 3px;
}
.row button {
  gap: 3px;
  display: flex;
  min-width: 13px;
  align-items: center;
  justify-content: center;
}
.row svg {
  height: 11px;
}
.row i {
  width: 1px;
  height: 14px;
  background: #ddd;
}
.row b,
.row em,
.row u {
  color: #888;
}
.pick {
  height: 15px;
  display: flex;
  padding-right: 2px;
  align-items: center;
  border-radius: 2px;
  background: #ececec;
  border: 1px solid #e2e2e2;
}
.pick select {
  flex: 1;
  min-width: 0;
  appearance: none;
}
.pick .chev {
  color: #aaa;
}
.pick.font {
  width: 92px;
}
.pick.size {
  width: 37px;
}

/* Navigation pane */
.workspace {
  flex: 1;
  display: flex;
  min-height: 0;
}
.objects {
  flex: none;
  width: 143px;
  padding: 2px 3px 0;
}
.objects .heading {
  gap: 7px;
  display: flex;
  height: 20px;
  align-items: center;
  padding-right: 7px;
}
.objects h1 {
  flex: 1;
  min-width: 0;
  margin-left: 3px;
  white-space: nowrap;
  font: 14px/20px Lato, sans-serif;
}
.objects .heading svg {
  width: 10px;
  height: 10px;
  display: block;
}
.lookup {
  height: 16px;
  display: flex;
  margin: 2px 3px 1px 0;
  padding: 0 2px 0 4px;
  align-items: center;
  background: #fff;
  border: 1px solid #b5b5b5;
}
.lookup input {
  flex: 1;
  min-width: 0;
}
.objects h2 {
  display: flex;
  height: 15px;
  padding: 0 9px 0 5px;
  align-items: center;
  justify-content: space-between;
  font: 700 9px/12px Lato, sans-serif;
}
.objects h2 svg {
  width: 8px;
  height: 8px;
}
.objects a {
  gap: 6px;
  height: 15px;
  display: flex;
  padding-left: 6px;
  align-items: center;
  border: 1px solid transparent;
  margin-right: 3px;
}
.objects a svg,
.kind {
  height: 10px;
}
.objects .selected {
  background: #fff;
  border-color: #b5b5b5;
}

/* Document windows */
.mdi {
  flex: 1;
  display: flex;
  min-width: 0;
  position: relative;
  padding: 26px 13px 1px 0;
  border-top: 2px solid #7a7a7a;
  border-left: 2px solid #7a7a7a;
}
.win {
  display: flex;
  flex-direction: column;
  background: #fff;
  border: 1px solid #b0586a;
}
.win > header {
  flex: none;
  height: 21px;
  display: flex;
  padding: 0 12px 0 6px;
  align-items: center;
  border-bottom: 1px solid #a4475a;
}
.win > header span {
  flex: 1;
  margin-left: 6px;
}
.win > header button {
  display: flex;
  margin-left: 21px;
}
.win > header button svg {
  width: 10px;
  height: 10px;
}

/* Datasheet */
.sheet {
  flex: 1;
  min-width: 0;
  padding-left: 1px;
}
.canvas {
  flex: 1;
  overflow: hidden;
  background: linear-gradient(90deg, #f3f5fc 12px, transparent 12px),
    linear-gradient(#f6f7fc 13px, transparent 13px),
    repeating-linear-gradient(90deg, transparent 0 63px, #fafafa 63px 64px) 12px 0,
    repeating-linear-gradient(transparent 0 12px, #fbfbfb 12px 13px);
}
table {
  width: 934px;
  height: 242px;
  color: #444;
  table-layout: fixed;
  border-spacing: 0;
  font: 9px/12px Inter, sans-serif;
}
.sel {
  width: 13px;
}
.id,
.city,
.county,
.post {
  width: 64px;
}
.company {
  width: 122px;
}
.line1 {
  width: 90px;
}
.line2 {
  width: 80px;
}
.phone {
  width: 69px;
}
.contact {
  width: 84px;
}
.email {
  width: 149px;
}
.add {
  width: 71px;
}
thead th {
  height: 13px;
  background: #e0e2e9;
  border-right: 1px solid #c9cbd3;
}
thead div {
  display: flex;
  align-items: center;
}
th {
  font-weight: 400;
}
thead span {
  flex: 1;
  min-width: 0;
  overflow: hidden;
}
thead button {
  width: 10px;
  height: 10px;
  flex: none;
  padding: 4px 3px;
}
thead button::before {
  content: "";
  display: block;
  border: 2px solid transparent;
  border-top-color: #444;
}
tbody th {
  background: linear-gradient(#bcc3d2, #bcc3d2) bottom / 100% 1px no-repeat #dfe3ec;
}
td {
  overflow: hidden;
  padding-left: 2px;
  white-space: nowrap;
  border-right: 1px solid #e6e6e6;
  background: #fff;
}
td:nth-child(2) {
  text-align: right;
  padding-right: 1px;
  border-right: none;
}
tr:nth-child(even) td {
  background: #f2f2f2;
}
.current td:nth-child(n + 3) {
  color: #1f3347;
  background: #a3ccee;
}

/* Record navigation */
.recnav {
  flex: none;
  height: 13px;
  display: flex;
  font-size: 8px;
  padding-left: 3px;
  align-items: center;
  background: #eef0f2;
  border-top: 1px solid #cfd3d8;
}
.recnav label {
  width: 29px;
}
.recnav button {
  display: flex;
  width: 11px;
  fill: #333;
}
.recnav button:disabled {
  fill: #bbb;
}
.recnav svg {
  width: 8px;
  height: 8px;
}
.recnav input {
  height: 11px;
  padding: 0 1px;
  background: #fff;
  color: #222;
}
.recnav .pos {
  width: 33px;
  margin-right: 3px;
}
.recnav .nofilter {
  gap: 3px;
  width: 58px;
  padding-left: 6px;
  align-items: center;
  white-space: nowrap;
  border: 1px solid #d5d8dc;
  border-width: 0 1px;
}
.recnav .nofilter svg {
  width: 10px;
  height: 10px;
}
.recnav .seek {
  width: 46px;
  margin-left: 1px;
}
.grip {
  width: 10px;
  height: 12px;
  margin-left: auto;
  background: #c9c9c9;
}

/* Form */
.win.form {
  top: 150px;
  left: 374px;
  width: 615px;
  position: absolute;
  padding: 0 2px 1px;
}
.win.form > header {
  padding-right: 10px;
}
.detail {
  display: flex;
}
.page {
  flex: 1;
}
.banner {
  gap: 8px;
  height: 23px;
  display: flex;
  padding-left: 30px;
  align-items: center;
  background: #b9d3ed;
}
.banner svg {
  width: 21px;
  height: 18px;
}
.banner h2 {
  color: #1d3f63;
  padding-top: 4px;
  font: 14px/18px Inter, sans-serif;
}
.body {
  display: flex;
}
.selector {
  width: 13px;
  padding: 2px 0 0 4px;
  border-right: 1px solid #444;
}
.selector svg {
  width: 6px;
  height: 8px;
  display: block;
}
form {
  flex: 1;
  display: grid;
  color: #7a7a7a;
  padding: 16px 2px 4px 18px;
  gap: 8px 5px;
  font: 9px/14px Inter, sans-serif;
  grid-template-columns: 71px 1fr 71px 1fr;
}
form input,
.field {
  width: 100%;
  height: 25px;
  min-width: 0;
  color: #444;
  background: #fff;
  padding: 0 3px 10px;
  border: 1px solid #b0b0b0;
}
.field {
  display: flex;
}
.field input {
  padding: 0;
  border: none;
  height: 14px;
}
mark {
  height: 12px;
  margin-top: 1px;
  line-height: 12px;
  color: #fff;
  background: #222;
}
.scroll {
  width: 11px;
  display: flex;
  padding: 2px 0;
  align-items: center;
  flex-direction: column;
}
.scroll svg {
  width: 8px;
  height: 6px;
}
.scroll span {
  flex: 1;
  width: 5px;
  margin: 2px 0;
  border-radius: 3px;
  background: #6b6b6b;
}
.pointer {
  top: 51px;
  left: 311px;
  width: 9px;
  height: 13px;
  position: absolute;
}

/* Status bar */
.status {
  flex: none;
  height: 15px;
  display: flex;
  font-size: 8px;
  padding: 0 1px 0 8px;
  align-items: center;
  background: #f5f4f4;
}
.status .mode {
  flex: 1;
}
.status button {
  width: 27px;
  height: 15px;
}
.status span + button {
  margin-left: 12px;
}
.status .on {
  background: #dedede;
}
.status svg {
  height: 10px;
}

/* Taskbar */
.taskbar {
  flex: none;
  height: 27px;
  display: flex;
  color: #eee;
  background: #1c1c1c;
  justify-content: space-between;
}
.pins {
  width: 491px;
  display: grid;
  grid-template-columns: repeat(15, 1fr);
}
.pins button {
  padding-top: 2px;
  border: 0 solid #d98a8a;
}
.pins svg {
  width: 16px;
  height: 16px;
}
.pins .run {
  border-bottom-width: 1px;
}
.pins .open {
  background: #4a4547;
}
.tray {
  display: flex;
  padding-right: 14px;
  align-items: center;
}
.tray button {
  width: 16px;
  display: flex;
  justify-content: center;
}
.tray .stock {
  width: 16px;
  height: 16px;
  margin-right: 5px;
}
.ticker {
  margin-right: 12px;
}
.ticker span {
  color: #e05a5a;
  margin-left: 4px;
}
time {
  width: 48px;
  font-size: 8px;
  text-align: center;
}
.tray time + button {
  margin-left: 4px;
}
```
